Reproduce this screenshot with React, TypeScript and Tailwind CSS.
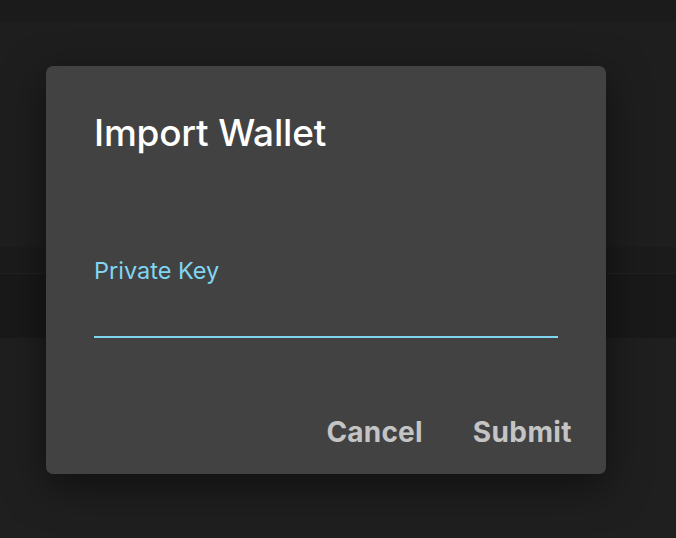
export default function App() {
  return (
    <div
      className="relative h-[538px] w-[676px] overflow-hidden bg-[#1f1f1f]"
      style={{ fontFamily: "Inter, 'Liberation Sans', sans-serif" }}
    >
      {/* background page (dimmed) */}
      <div className="flex flex-col">
        <div className="h-[22px] bg-[#1b1b1b]" />
        <div className="h-[225px] bg-[#1e1e1e]" />
        <div className="h-[26px] bg-[#1b1b1b]" />
        <div className="h-px bg-[#212121]" />
        <div className="h-[64px] bg-[#191919]" />
        <div className="h-[200px] bg-[#1f1f1f]" />
      </div>

      {/* dialog */}
      <div className="absolute left-[46px] top-[66px] flex h-[408px] w-[560px] flex-col rounded-[7px] bg-[#424242] shadow-[0_12px_40px_rgba(0,0,0,0.5)]">
        <h2 className="mt-[45px] ml-[48px] text-[37px] leading-[44px] font-medium tracking-[-0.2px] text-white">
          Import Wallet
        </h2>
        <div className="mt-[102px] ml-[48px] mr-[48px]">
          <label className="block text-[23.5px] leading-[28px] text-[#80d6f2]">
            Private Key
          </label>
          <input
            type="text"
            className="mt-[21px] block h-[32px] w-full border-b-2 border-[#80d6f2] bg-transparent text-white outline-none"
          />
        </div>
        <div className="mt-auto mb-[22px] mr-[34px] flex justify-end gap-[50px]">
          <button className="text-[28px] leading-[40px] font-bold tracking-[0.2px] text-[#c4c4c4]">
            Cancel
          </button>
          <button className="text-[28px] leading-[40px] font-bold tracking-[0.4px] text-[#c4c4c4]">
            Submit
          </button>
        </div>
      </div>
    </div>
  );
}
